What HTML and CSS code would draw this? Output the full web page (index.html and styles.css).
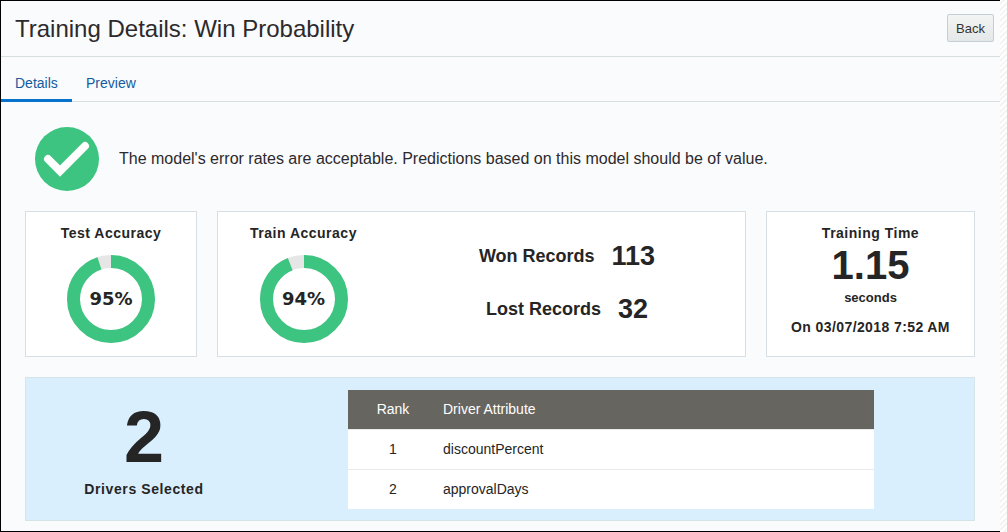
FILE: index.html
```html
<!DOCTYPE html>
<html lang="en">
<head>
    <meta charset="UTF-8">
    <title>Training Details: Win Probability</title>
    <link rel="stylesheet" href="styles.css">
</head>
<body>
    <div class="shot">
        <div class="page">
            <div class="page-header">
                <h1>Training Details: Win Probability</h1>
                <button type="button" class="back-btn">Back</button>
            </div>
            <div class="tabs">
                <a class="tab active">Details</a>
                <a class="tab">Preview</a>
            </div>
            <div class="content">
                <div class="status">
                    <svg class="status-icon" viewBox="0 0 64 64" width="64" height="64">
                        <circle cx="32" cy="32" r="32" fill="#3cc480"/>
                        <path d="M13 32 L25 44 L50 19" fill="none" stroke="#fff" stroke-width="8" stroke-linecap="round" stroke-linejoin="miter"/>
                    </svg>
                    <p>The model's error rates are acceptable. Predictions based on this model should be of value.</p>
                </div>
                <div class="cards">
                    <div class="card gauge-col">
                        <div class="card-title">Test Accuracy</div>
                        <div class="donut">
                            <svg viewBox="0 0 88 88" width="88" height="88">
                                <circle class="donut-rest" cx="44" cy="44" r="37.5" pathLength="100"/>
                                <circle class="donut-value" cx="44" cy="44" r="37.5" pathLength="100" stroke-dasharray="95 5" transform="rotate(-90 44 44)"/>
                            </svg>
                            <span class="donut-label">95%</span>
                        </div>
                    </div>
                    <div class="card train-card">
                        <div class="gauge-col">
                            <div class="card-title">Train Accuracy</div>
                            <div class="donut">
                                <svg viewBox="0 0 88 88" width="88" height="88">
                                    <circle class="donut-rest" cx="44" cy="44" r="37.5" pathLength="100"/>
                                    <circle class="donut-value" cx="44" cy="44" r="37.5" pathLength="100" stroke-dasharray="94 6" transform="rotate(-90 44 44)"/>
                                </svg>
                                <span class="donut-label">94%</span>
                            </div>
                        </div>
                        <div class="records">
                            <div class="record"><span class="record-label">Won Records</span><span class="record-value">113</span></div>
                            <div class="record"><span class="record-label">Lost Records</span><span class="record-value">32</span></div>
                        </div>
                    </div>
                    <div class="card time-card">
                        <div class="card-title">Training Time</div>
                        <div class="time-value">1.15</div>
                        <div class="time-unit">seconds</div>
                        <div class="time-date">On 03/07/2018 7:52 AM</div>
                    </div>
                </div>
                <div class="drivers">
                    <div class="drivers-count">
                        <div class="drivers-number">2</div>
                        <div class="drivers-label">Drivers Selected</div>
                    </div>
                    <table class="drivers-table">
                        <thead>
                            <tr><th class="rank">Rank</th><th>Driver Attribute</th></tr>
                        </thead>
                        <tbody>
                            <tr><td class="rank">1</td><td>discountPercent</td></tr>
                            <tr><td class="rank">2</td><td>approvalDays</td></tr>
                        </tbody>
                    </table>
                </div>
            </div>
        </div>
        <div class="torn-edge"></div>
    </div>
</body>
</html>
```

FILE: styles.css
```css
html, body {
    margin: 0;
    padding: 0;
}
body {
    font-family: "Liberation Sans", Arial, sans-serif;
    color: #252525;
    background-color: #fff;
    overflow: hidden;
}
.shot {
    display: flex;
    width: 1007px;
    height: 532px;
}
.page {
    width: 1000px;
    height: 532px;
    box-sizing: border-box;
    border: 1px solid #000;
    border-right: none;
    background-color: #fafbfd;
}
.torn-edge {
    flex: 1;
    background: repeating-linear-gradient(135deg, #fff 0, #fff 2px, #f5f4f2 2px, #f5f4f2 4px);
}
.page-header {
    display: flex;
    align-items: center;
    justify-content: space-between;
    height: 55px;
    padding: 0 6px 0 14px;
    border-bottom: 1px solid #d6dfdf;
}
h1 {
    margin: 0;
    font-size: 24px;
    font-weight: normal;
    color: #2c2a2c;
}
.back-btn {
    width: 47px;
    height: 28px;
    padding: 0;
    margin-top: -1px;
    font-family: inherit;
    font-size: 13px;
    color: #333;
    background: linear-gradient(#f3f4f4, #e5e8e8);
    border: 1px solid #c4ced7;
    border-radius: 2px;
}
.tabs {
    display: flex;
    height: 44px;
    border-bottom: 1px solid #d6dfdf;
}
.tab {
    box-sizing: border-box;
    height: 45px;
    padding: 18px 15px 0 14px;
    font-size: 14px;
    color: #145c9e;
}
.tab.active {
    width: 71px;
    border-bottom: 3px solid #0572ce;
}
.content {
    padding: 25px 25px 0 24px;
}
.status {
    display: flex;
    align-items: center;
    gap: 20px;
    padding-left: 10px;
    height: 64px;
}
.status p {
    margin: 0;
    font-size: 16px;
    color: #2c2a2c;
}
.cards {
    display: grid;
    grid-template-columns: 172px 529px 209px;
    gap: 20px;
    margin-top: 20px;
    height: 146px;
}
.card {
    box-sizing: border-box;
    background-color: #fff;
    border: 1px solid #d6dfe3;
}
.card-title {
    padding-top: 13px;
    font-size: 14px;
    font-weight: bold;
    letter-spacing: 0.5px;
    line-height: 16px;
    text-align: center;
}
.donut {
    position: relative;
    width: 88px;
    height: 88px;
    margin: 14px auto 0;
}
.donut svg {
    display: block;
}
.donut circle {
    fill: none;
    stroke-width: 13;
}
.donut-rest {
    stroke: #e6e6e6;
}
.donut-value {
    stroke: #3cc480;
}
.donut-label {
    position: absolute;
    left: 0;
    right: 0;
    top: 33px;
    font-family: "DejaVu Sans", sans-serif;
    font-size: 18px;
    font-weight: bold;
    line-height: 22px;
    text-align: center;
}
.train-card {
    display: flex;
}
.train-card .gauge-col {
    width: 171px;
    flex: none;
}
.records {
    flex: 1;
    display: flex;
    flex-direction: column;
    align-items: center;
    padding-top: 28px;
    gap: 21px;
}
.record {
    display: flex;
    align-items: center;
    gap: 17px;
    height: 32px;
}
.record-label {
    font-size: 18px;
    font-weight: bold;
}
.record-value {
    font-size: 27px;
    font-weight: bold;
}
.time-card {
    text-align: center;
}
.time-value {
    margin-top: 4px;
    font-size: 40px;
    font-weight: bold;
    line-height: 40px;
}
.time-unit {
    margin-top: 5px;
    font-size: 13px;
    font-weight: bold;
    line-height: 16px;
}
.time-date {
    margin-top: 13px;
    font-size: 14px;
    font-weight: bold;
    letter-spacing: 0.4px;
    line-height: 16px;
}
.drivers {
    display: flex;
    align-items: center;
    box-sizing: border-box;
    height: 144px;
    margin-top: 20px;
    background-color: #d9effe;
    border: 1px solid #d6e4ea;
}
.drivers-count {
    width: 236px;
    margin-right: 86px;
    text-align: center;
}
.drivers-number {
    font-size: 72px;
    font-weight: bold;
    line-height: 72px;
}
.drivers-label {
    margin-top: 8px;
    font-size: 14px;
    font-weight: bold;
    letter-spacing: 0.6px;
    line-height: 16px;
}
.drivers-table {
    width: 526px;
    border-collapse: collapse;
    background-color: #fff;
    font-size: 14px;
}
.drivers-table th {
    height: 39px;
    padding: 0 0 0 5px;
    font-weight: normal;
    text-align: left;
    color: #fff;
    background-color: #67655f;
}
.drivers-table td {
    height: 39px;
    padding: 0 0 0 5px;
    border-top: 1px solid #eaeaea;
}
.drivers-table .rank {
    width: 90px;
    padding: 0;
    text-align: center;
}
```
